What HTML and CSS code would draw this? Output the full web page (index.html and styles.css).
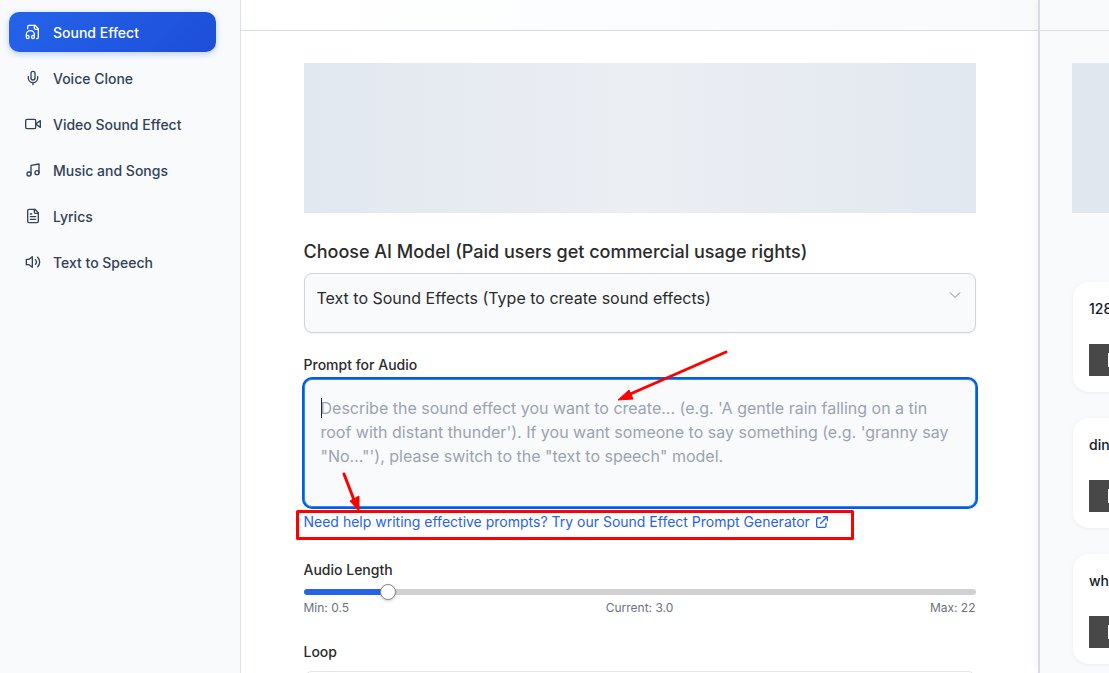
FILE: index.html
```html
<!DOCTYPE html>
<html lang="en">
<head>
	<meta charset="utf-8">
	<meta name="viewport" content="width=device-width, initial-scale=1">
	<title>Sound Effect</title>
	<link rel="stylesheet" href="styles.css">
</head>
<body>
	<div class="layout">
		<nav class="sidebar">
			<a class="nav-item active" href="#">
				<svg class="icon" viewBox="0 0 24 24"><path d="M17.5 22h.5a2 2 0 0 0 2-2V7l-5-5H6a2 2 0 0 0-2 2v3"/><path d="M14 2v4a2 2 0 0 0 2 2h4"/><path d="M2 19a2 2 0 1 1 4 0v1a2 2 0 1 1-4 0v-4a6 6 0 0 1 12 0v4a2 2 0 1 1-4 0v-1a2 2 0 1 1 4 0"/></svg>
				Sound Effect
			</a>
			<a class="nav-item" href="#">
				<svg class="icon" viewBox="0 0 24 24"><path d="M12 2a3 3 0 0 0-3 3v7a3 3 0 0 0 6 0V5a3 3 0 0 0-3-3Z"/><path d="M19 10v2a7 7 0 0 1-14 0v-2"/><path d="M12 19v3"/></svg>
				Voice Clone
			</a>
			<a class="nav-item" href="#">
				<svg class="icon" viewBox="0 0 24 24"><path d="m23 7-7 5 7 5V7Z"/><rect x="1" y="5" width="15" height="14" rx="2"/></svg>
				Video Sound Effect
			</a>
			<a class="nav-item" href="#">
				<svg class="icon" viewBox="0 0 24 24"><path d="M9 18V5l12-2v13"/><circle cx="6" cy="18" r="3"/><circle cx="18" cy="16" r="3"/></svg>
				Music and Songs
			</a>
			<a class="nav-item" href="#">
				<svg class="icon" viewBox="0 0 24 24"><path d="M15 2H6a2 2 0 0 0-2 2v16a2 2 0 0 0 2 2h12a2 2 0 0 0 2-2V7Z"/><path d="M14 2v4a2 2 0 0 0 2 2h4"/><path d="M10 9H8"/><path d="M16 13H8"/><path d="M16 17H8"/></svg>
				Lyrics
			</a>
			<a class="nav-item" href="#">
				<svg class="icon" viewBox="0 0 24 24"><path d="M11 4 6 8H2v8h4l5 4V4Z"/><path d="M15.54 8.46a5 5 0 0 1 0 7.07"/><path d="M19.07 4.93a10 10 0 0 1 0 14.14"/></svg>
				Text to Speech
			</a>
		</nav>

		<main class="main">
			<div class="topbar topbar-main"></div>
			<form class="form">
				<div class="skeleton"></div>

				<label class="title" for="model">Choose AI Model (Paid users get commercial usage rights)</label>
				<div class="select-wrap">
					<select id="model" name="model">
						<option>Text to Sound Effects (Type to create sound effects)</option>
					</select>
					<svg class="chevron" viewBox="0 0 12 12"><path d="M1 3.5l5 5 5-5"/></svg>
				</div>

				<div class="prompt">
					<label for="prompt">Prompt for Audio</label>
					<div class="textarea-wrap">
						<textarea id="prompt" name="prompt" placeholder="Describe the sound effect you want to create... (e.g. 'A gentle rain falling on a tin roof with distant thunder'). If you want someone to say something (e.g. 'granny say &quot;No...&quot;'), please switch to the &quot;text to speech&quot; model."></textarea>
						<span class="caret"></span>
					</div>
					<a class="help-link" href="#">Need help writing effective prompts? Try our Sound Effect Prompt Generator
						<svg class="external" viewBox="0 0 24 24"><path d="M10 6H6a2 2 0 0 0-2 2v10a2 2 0 0 0 2 2h10a2 2 0 0 0 2-2v-4M14 4h6v6M20 4 10 14"/></svg>
					</a>
					<!-- red arrows and box pointing at the help link -->
					<svg class="notes" viewBox="0 0 570 200" aria-hidden="true">
						<path class="line" d="M434 3 336 46"/>
						<path class="head" d="M326 51 337 41 341 50Z"/>
						<path class="line" d="M52 125 62 151"/>
						<path class="head" d="M67 162 58 152 67 147Z"/>
						<rect class="line" x="5.5" y="162.5" width="555" height="27"/>
					</svg>
				</div>

				<div class="field">
					<label for="length">Audio Length</label>
					<input type="range" id="length" name="length" min="0.5" max="22" step="0.5" value="3" style="--fill: 12.5%">
					<div class="range-info">
						<span>Min: 0.5</span>
						<span>Current: 3.0</span>
						<span>Max: 22</span>
					</div>
				</div>

				<div class="field">
					<label for="loop">Loop</label>
					<select id="loop" name="loop" class="loop"></select>
				</div>
			</form>
		</main>

		<aside class="history">
			<div class="topbar"></div>
			<div class="history-body">
				<div class="skeleton side"></div>
				<div class="card">
					<p>128</p>
					<div class="player"><span class="play"></span></div>
				</div>
				<div class="card">
					<p>din</p>
					<div class="player"><span class="play"></span></div>
				</div>
				<div class="card">
					<p>wh</p>
					<div class="player"><span class="play"></span></div>
				</div>
			</div>
		</aside>
	</div>
</body>
</html>
```
FILE: styles.css
```css
* {
	box-sizing: border-box;
}
body {
	margin: 0;
	font-family: Inter, "Liberation Sans", sans-serif;
	font-size: 14px;
	line-height: 20px;
	color: #2b2b2b;
	background: #fff;
}
.layout {
	display: grid;
	grid-template-columns: 241px minmax(0, 1fr) 71px;
	height: 100vh;
	overflow: hidden;
}

/* Sidebar */
.sidebar {
	display: flex;
	flex-direction: column;
	gap: 6px;
	padding: 12px 24px 12px 9px;
	background: #f8fafc;
	border-right: 1px solid #dbe1ea;
}
.nav-item {
	display: flex;
	align-items: center;
	gap: 12px;
	height: 40px;
	padding: 2px 16px 0;
	border-radius: 10px;
	color: #334155;
	font-weight: 500;
	text-decoration: none;
}
.nav-item.active {
	color: #fff;
	background: linear-gradient(135deg, #2563eb, #1d4ed8);
	box-shadow: 0 2px 6px rgba(37, 99, 235, 0.3);
}
.icon {
	width: 16px;
	height: 16px;
	margin-bottom: 2px;
	fill: none;
	stroke: currentColor;
	stroke-width: 2;
	stroke-linecap: round;
	stroke-linejoin: round;
}

/* Main column */
.topbar {
	height: 31px;
	border-bottom: 1px solid #d8dbe2;
	background: #f8fafc;
}
.topbar-main {
	background: linear-gradient(90deg, #fff, #f8fafc);
}
.main {
	min-width: 0;
	overflow: hidden;
}
.form {
	max-width: 672px;
	margin: 0 auto;
	padding-top: 32px;
}
.skeleton {
	height: 150px;
	background: linear-gradient(90deg, #e2e8f0, #ebeef3 50%, #e2e8f0);
}
label {
	display: block;
	font-weight: 500;
}
.title {
	margin: 25px 0 7px;
	font-size: 18px;
	line-height: 28px;
}
.select-wrap {
	position: relative;
}
select {
	display: block;
	width: 100%;
	height: 60px;
	padding: 12px 36px 22px 12px;
	appearance: none;
	border: 1px solid #d1d5db;
	border-radius: 8px;
	background: #f8fafc;
	box-shadow: 0 1px 2px rgba(0, 0, 0, 0.05);
	color: #2b2b2b;
	font: 16px/24px Inter, "Liberation Sans", sans-serif;
}
.chevron {
	position: absolute;
	top: 16px;
	right: 15px;
	width: 12px;
	height: 12px;
	fill: none;
	stroke: #888;
	pointer-events: none;
}
.prompt {
	position: relative;
	margin-top: 22px;
}
.textarea-wrap {
	position: relative;
	margin-top: 4px;
}
textarea {
	display: block;
	width: 100%;
	height: 128px;
	padding: 16px;
	resize: none;
	outline: none;
	border: 1px solid #3b82f6;
	border-radius: 8px;
	background: #f8fafc;
	box-shadow: 0 0 0 2px #005fe0;
	font: 16px/24px Inter, "Liberation Sans", sans-serif;
}
textarea::placeholder {
	color: #9ca3af;
}
.caret {
	position: absolute;
	top: 19px;
	left: 17px;
	width: 1px;
	height: 20px;
	background: #1f2937;
}
.help-link {
	display: flex;
	align-items: center;
	gap: 4px;
	margin-top: 5px;
	color: #2563eb;
	text-decoration: none;
}
.external {
	width: 16px;
	height: 16px;
	fill: none;
	stroke: currentColor;
	stroke-width: 2;
	stroke-linecap: round;
	stroke-linejoin: round;
}
.notes {
	position: absolute;
	top: -6px;
	left: -12px;
	width: 570px;
	height: 200px;
	pointer-events: none;
}
.notes .line {
	fill: none;
	stroke: #f00;
	stroke-width: 3;
	stroke-linecap: round;
	stroke-linejoin: round;
}
.notes .head {
	fill: #f00;
	stroke: #f00;
}

.field {
	margin-top: 28px;
}
input[type="range"] {
	display: block;
	width: 100%;
	height: 16px;
	margin: 4px 0 0;
	appearance: none;
	background: none;
}
input[type="range"]::-webkit-slider-runnable-track {
	height: 6px;
	border-radius: 3px;
	background: linear-gradient(90deg, #2563eb var(--fill), #d1d1d1 var(--fill));
}
input[type="range"]::-webkit-slider-thumb {
	width: 16px;
	height: 16px;
	margin-top: -5px;
	appearance: none;
	border: 1px solid #888;
	border-radius: 50%;
	background: #fff;
	box-shadow: 0 1px 3px rgba(0, 0, 0, 0.2);
}
.range-info {
	display: flex;
	justify-content: space-between;
	font-size: 12px;
	line-height: 16px;
	color: #6b7280;
}
.field + .field {
	margin-top: 26px;
}
.loop {
	margin-top: 9px;
	border-color: #e5e7eb;
	background: #fff;
}

/* Right column */
.history {
	overflow: hidden;
	border-left: 2px solid #d8dbe2;
	background: #f8fafc;
	box-shadow: -2px 0 8px rgba(0, 0, 0, 0.04);
}
.history-body {
	width: 320px;
	padding: 32px;
}
.skeleton.side {
	margin-bottom: 69px;
	background: #e1e7ef;
}
.card {
	height: 110px;
	margin: 0 0 26px 1px;
	padding: 17px 16px;
	border-radius: 16px;
	background: #fff;
	box-shadow: 0 1px 4px rgba(15, 23, 42, 0.06);
}
.card p {
	margin: 0 0 25px;
	font-weight: 500;
	color: #111827;
}
.player {
	display: flex;
	align-items: center;
	height: 32px;
	padding-left: 19px;
	background: #484848;
}
.play {
	width: 10px;
	height: 14px;
	background: #fff;
}
```
